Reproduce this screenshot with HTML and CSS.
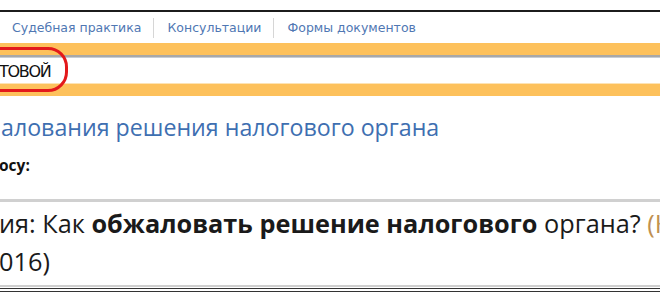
FILE: index.html
```html
<!DOCTYPE html>
<html lang="ru">
<head>
<meta charset="utf-8">
<link rel="stylesheet" href="styles.css">
</head>
<body>
<div class="topline"></div>
<nav class="nav">
  <span class="nav-item">Судебная практика</span>
  <span class="nav-item">Консультации</span>
  <span class="nav-item last">Формы документов</span>
</nav>
<div class="bar bar-top"></div>
<div class="search">
  <span class="query">ТОВОЙ</span>
  <span class="ring"></span>
</div>
<div class="bar bar-bottom"></div>
<section class="result">
  <h1 class="title">алования решения налогового органа</h1>
  <p class="label">осу:</p>
</section>
<div class="answer">
  <p class="answer-text">ия: Как <b>обжаловать решение налогового</b> органа? <span class="cut">(К</span><br>016)</p>
</div>
<div class="bottom-lines"></div>
</body>
</html>
```
FILE: styles.css
```css
html, body {
  margin: 0;
  padding: 0;
  background: #ffffff;
  overflow: hidden;
}
body {
  width: 660px;
  height: 300px;
  font-family: "Open Sans", "Noto Sans", sans-serif;
}
.topline {
  margin-top: 10px;
  height: 2px;
  background: #1c1c1c;
}
.nav {
  height: 31px;
  display: flex;
  align-items: center;
  padding-left: 12px;
  font-family: "DejaVu Sans", sans-serif;
  font-size: 12.5px;
  color: #4f77b3;
}
.nav-item {
  padding-right: 12px;
  margin-right: 13px;
  border-right: 1px solid #d6d6d6;
  line-height: 20px;
}
.nav-item.last {
  border-right: none;
}
.bar {
  background: #fdc15c;
}
.bar-top {
  height: 12px;
  border-bottom: 2px solid #a8a8a8;
}
.search {
  position: relative;
  height: 25px;
  border-top: 1px solid #c6cdd5;
  display: flex;
  align-items: center;
}
.query {
  font-family: "DejaVu Sans", sans-serif;
  font-size: 16px;
  color: #111;
  margin-left: -1px;
  letter-spacing: -1.3px;
  padding-top: 2px;
}
.ring {
  position: absolute;
  left: -30px;
  top: -11px;
  width: 92px;
  height: 39px;
  border: 3px solid #e3191b;
  border-radius: 20px;
}
.bar-bottom {
  height: 12px;
  border-top: 1px solid #fde3b5;
}
.result {
  padding: 16px 0 0 1px;
  box-sizing: border-box;
  height: 103px;
}
.title {
  margin: 0;
  font-weight: 400;
  font-size: 23.2px;
  line-height: 30px;
  color: #3e6fb1;
}
.label {
  margin: 13px 0 0 -2px;
  font-weight: 700;
  font-size: 15.5px;
  line-height: 20px;
  color: #111;
}
.answer {
  border-top: 3px solid #d0d0d0;
  height: 83px;
  border-bottom: 2px solid #cfcfcf;
}
.answer-text {
  margin: 2px 0 0 -1px;
  font-size: 25.3px;
  line-height: 38px;
  color: #1a1a1a;
  white-space: nowrap;
}
.answer-text b {
  font-weight: 700;
}
.cut {
  color: #c09050;
}
.bottom-lines {
  height: 1px;
  margin-top: 1px;
  background: #333;
  box-shadow: 0 3px 0 #333;
}
```
